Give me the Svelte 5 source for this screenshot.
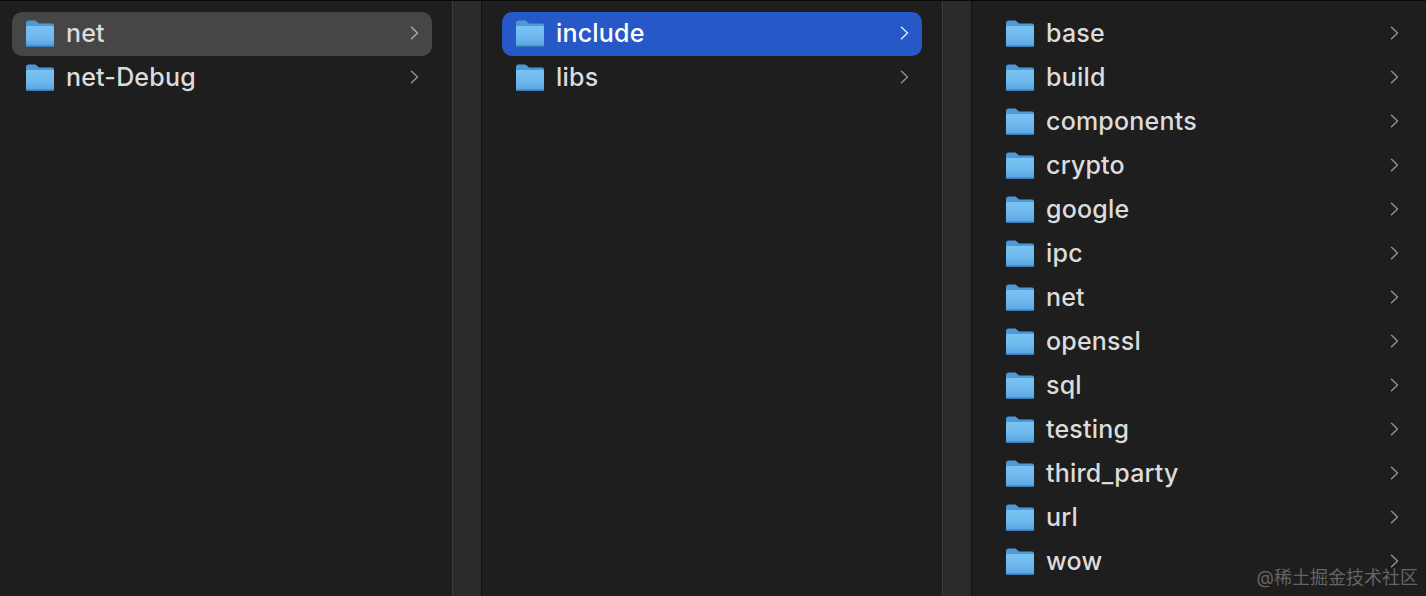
<script>
  const columns = [
    { items: ['net', 'net-Debug'], selected: 'net', tone: 'inactive' },
    { items: ['include', 'libs'], selected: 'include', tone: 'active' },
    {
      items: ['base', 'build', 'components', 'crypto', 'google', 'ipc', 'net', 'openssl', 'sql', 'testing', 'third_party', 'url', 'wow'],
      selected: null,
      tone: '',
    },
  ];
</script>

<div class="finder">
  {#each columns as column, index}
    {#if index > 0}
      <div class="divider"></div>
    {/if}
    <ul class="column">
      {#each column.items as item}
        <li class="row {item === column.selected ? column.tone : ''}">
          <svg class="folder" width="30" height="28" viewBox="0 0 30 28">
            <defs>
              <linearGradient id="body-{index}-{item}" x1="0" y1="0" x2="0" y2="1">
                <stop offset="0" stop-color="#7ac3f1" />
                <stop offset="0.55" stop-color="#6db8ee" />
                <stop offset="1" stop-color="#56a3e2" />
              </linearGradient>
            </defs>
            <path d="M1 3C1 1.4 2 .5 3.6 .5H9.4C10.8 .5 11.5 1.1 12.3 2C13 2.8 13.6 3.4 14.8 3.4H27C28.5 3.4 29 4.2 29 5.6V10H1Z" fill="#4f98d8" />
            <path d="M1 7.4C1 6.4 1.7 5.9 2.6 5.9H27.4C28.3 5.9 29 6.4 29 7.4V25C29 26.3 28.4 27 27.2 27H2.8C1.6 27 1 26.3 1 25Z" fill="url(#body-{index}-{item})" />
            <path d="M1 25.6H29V25.7C29 26.6 28.4 27 27.2 27H2.8C1.6 27 1 26.6 1 25.7Z" fill="#3f7db6" />
          </svg>
          <span class="name">{item}</span>
          <svg class="chevron" width="9" height="14" viewBox="0 0 9 14">
            <path d="M1.5 1.2L7.5 7L1.5 12.8" fill="none" stroke="currentColor" stroke-width="1.5" stroke-linecap="round" stroke-linejoin="round" />
          </svg>
        </li>
      {/each}
    </ul>
  {/each}
  <div class="watermark">@稀土掘金技术社区</div>
</div>

<style>
  :global(body) {
    background: #1e1e1e;
  }

  .finder {
    background: #1e1e1e;
    border-top: 1px solid #080808;
    box-sizing: border-box;
    display: grid;
    font-family: Inter, "Noto Sans CJK SC", sans-serif;
    grid-template-columns: 452px 30px 460px 30px 1fr;
    height: 596px;
    overflow: hidden;
    position: relative;
    width: 1426px;
  }

  .column {
    list-style: none;
    margin: 0;
    min-width: 0;
    padding: 11px 20px 0;
  }

  .column:first-child {
    padding-left: 12px;
  }

  .column:last-of-type {
    padding-right: 14px;
  }

  .divider {
    background: #2a2a2a;
    border-left: 1px solid #3a3a3a;
    border-right: 1px solid #111111;
    box-sizing: border-box;
  }

  .row {
    align-items: center;
    border-radius: 10px;
    color: #dcdcdc;
    display: flex;
    height: 44px;
    padding: 0 13px;
  }

  .row.inactive {
    background: #464646;
  }

  .row.active {
    background: #2659c7;
    color: #ffffff;
  }

  .folder {
    flex: none;
    margin-right: 11px;
  }

  .name {
    flex: 1;
    font-size: 25px;
    font-weight: 500;
    letter-spacing: 0.2px;
    padding-bottom: 2px;
  }

  .chevron {
    color: #8f8f8f;
    flex: none;
    margin-bottom: 2px;
  }

  .inactive .chevron {
    color: #aaaaaa;
  }

  .active .chevron {
    color: #dbe5fb;
  }

  .watermark {
    bottom: 7px;
    color: #646464;
    font-size: 18px;
    position: absolute;
    right: 8px;
  }
</style>
